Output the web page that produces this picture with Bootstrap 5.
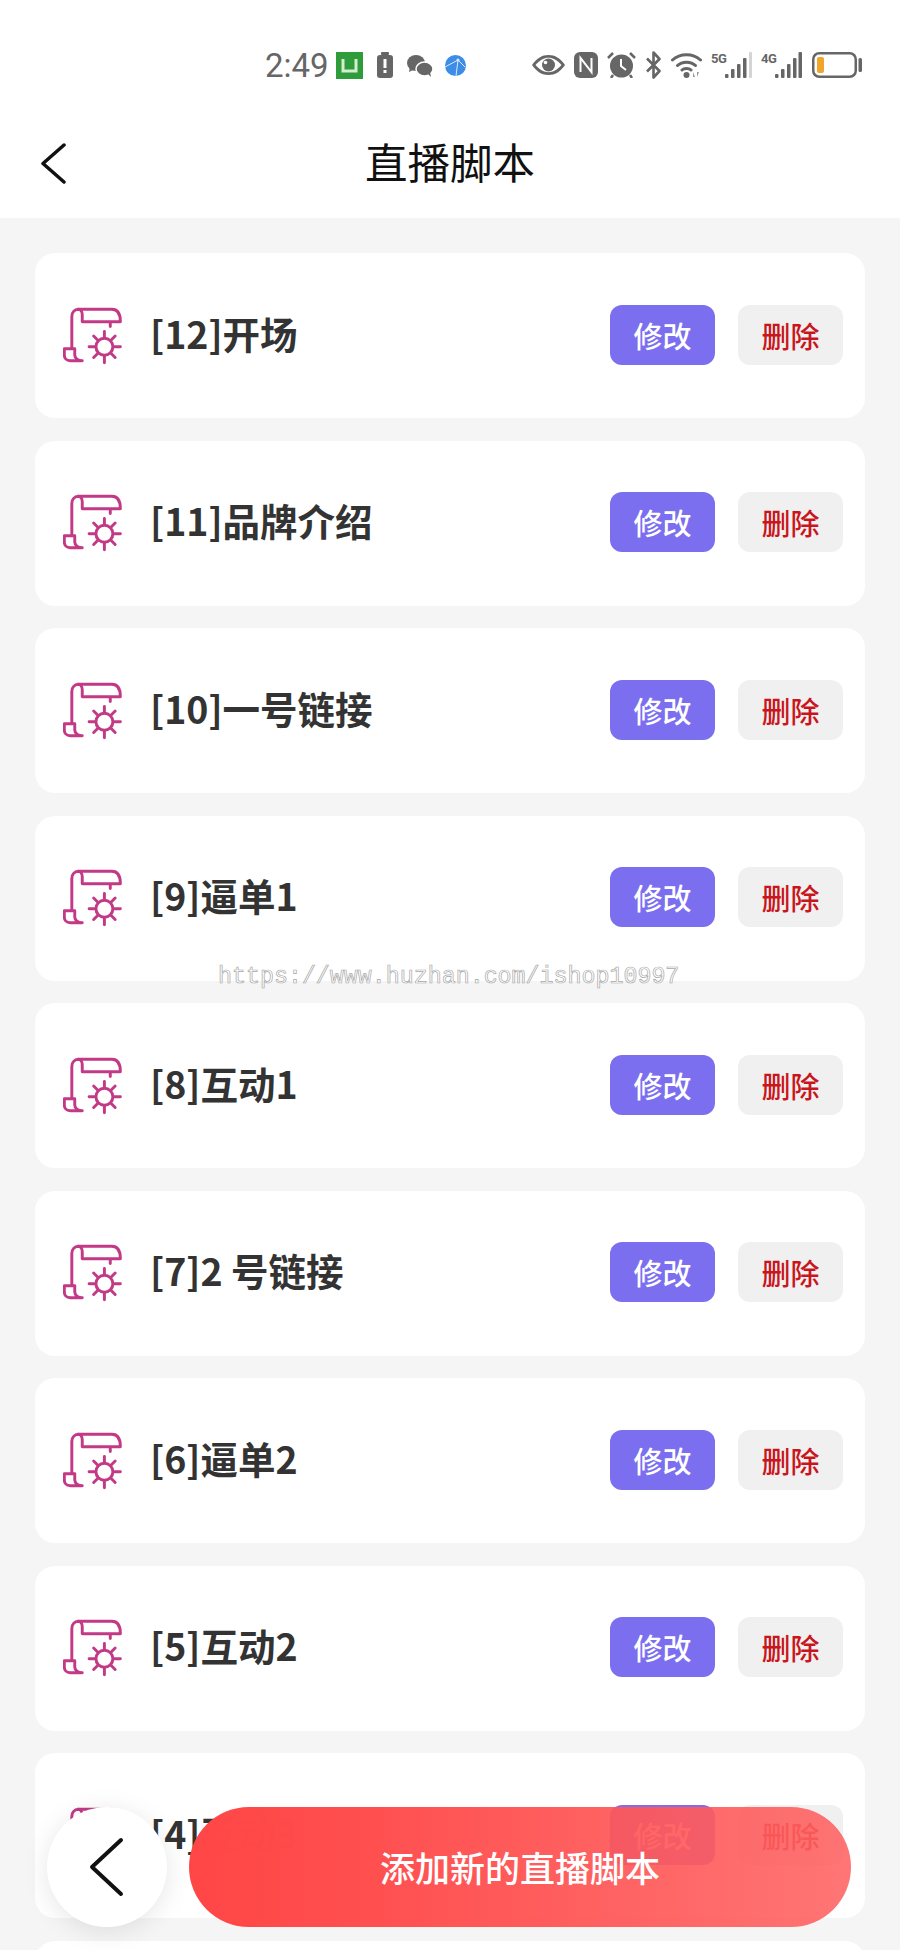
<!DOCTYPE html>
<html lang="zh-CN">
<head>
  <meta charset="UTF-8" />
  <title>直播脚本</title>
  <link href="https://cdn.jsdelivr.net/npm/bootstrap@5.3.3/dist/css/bootstrap.min.css" rel="stylesheet" />
  <style>
    body { background: #f5f5f5; font-family: "Noto Sans CJK SC", "Noto Sans", sans-serif; }
    .screen { width: 900px; height: 1950px; overflow: hidden; }
    .status-row { height: 100px; padding: 52px 38px 0 265px; color: #666; }
    .status-row svg { display: block; fill: #666; }
    .clock { font: 400 33px/27px Roboto, sans-serif; color: #666; width: 62px; }
    .net-tag { font: 700 13px/10px Roboto, sans-serif; color: #666; width: 14px; margin-top: 2px; letter-spacing: -.5px; }
    .ml-9 { margin-left: 9px; }
    .ml-10 { margin-left: 10px; }
    .ml-12 { margin-left: 12px; }
    .ml-14 { margin-left: 14px; }
    .top-nav { height: 118px; }
    .top-nav h1 { font-size: 42.5px; line-height: 1; font-weight: 400; color: #111; margin: 4px 0 0; }
    .nav-back { left: 41px; top: 43px; }
    .script-list { padding: 35px 35px 0; }
    .script-row { height: 165px; margin-bottom: 22.5px; padding: 0 22px 0 28px; border: 0; border-radius: 20px; flex-shrink: 0; }
    .script-name { font-size: 37.5px; font-weight: 700; color: #333; margin: -6px 0 0 27px; line-height: 1; }
    .act-btn { width: 105px; height: 60px; padding: 0; margin-top: -2px; font-size: 29px; font-weight: 500; line-height: 58px; border: 0; border-radius: 12px; }
    .act-edit { background: #7b6ff0; color: #fff; }
    .act-del { background: #f0f0f0; color: #c9161c; margin-left: 23px; }
    .scroll-ico { width: 60px; height: 58px; fill: none; stroke: #c23a86; stroke-width: 9; stroke-linecap: round; stroke-linejoin: round; }
    .mark-text { left: 218px; top: 963px; font: 400 23.3px/28px "Liberation Mono", monospace; color: #fff; -webkit-text-stroke: .7px #a8a8a8; white-space: nowrap; }
    .round-back { left: 47px; top: 1807px; width: 120px; height: 120px; background: #fff; box-shadow: 0 4px 26px rgba(0,0,0,.1); }
    .add-btn { left: 189px; top: 1807px; width: 662px; height: 120px; padding-bottom: 6px; border: 0; color: #fff; font-size: 35px; font-weight: 500; background: linear-gradient(90deg, #ff4646 0%, rgba(255,76,76,.99) 25%, rgba(255,98,98,.88) 100%); }
    .add-btn:hover { color: #fff; background: linear-gradient(90deg, #ff4646 0%, rgba(255,76,76,.99) 25%, rgba(255,98,98,.88) 100%); }
  </style>
</head>
<body>
  <svg width="0" height="0" class="position-absolute">
    <symbol id="scroll" viewBox="186 225 184 178">
      <path d="M245 390H208C197 390 190 382 190 372V353H222V372C222 382 232 390 245 390 M213 353V254C213 241 222 232 235 232H336C352 232 362 243 362 270H245V249C245 240 240 232 232 232 M331 270V285"/>
      <circle cx="313" cy="347" r="26"/>
      <path d="M313 300V319 M313 375V396 M266 347H285 M341 347H362 M280 314L293 327 M333 367L346 380 M280 380L293 367 M333 327L346 314"/>
    </symbol>
  </svg>

  <div class="screen position-relative">
    <div class="bg-white">
      <div class="status-row d-flex justify-content-between">
        <div class="d-flex align-items-start">
          <span class="clock">2:49</span>
          <svg class="ml-9" width="27" height="27" viewBox="0 0 27 27"><rect width="27" height="27" fill="#2f9c3c"/><path d="M7 7V19H20V7" fill="none" stroke="#d5ecd0" stroke-width="3"/></svg>
          <svg class="ml-14" width="16" height="26" viewBox="0 0 16 26"><rect x="4" y="0" width="8" height="3" rx="1"/><rect y="3" width="16" height="23" rx="3"/><rect x="6.500" y="7" width="3" height="9" fill="#fff"/><rect x="6.500" y="18" width="3" height="3" fill="#fff"/></svg>
          <svg class="ml-14" style="margin-top:3px" width="26" height="22" viewBox="0 0 26 22"><ellipse cx="9" cy="8" rx="9" ry="8"/><path d="M3 12L2 17L8 14Z"/><ellipse cx="17.500" cy="14" rx="8.500" ry="7" stroke="#fff" stroke-width="1.500"/><path d="M21 19L24 22L23 17Z"/></svg>
          <svg class="ml-12" style="margin-top:3px" width="21" height="21" viewBox="0 0 21 21"><circle cx="10.500" cy="10.500" r="10.500" fill="#3d8de6"/><path d="M0 12L13 5L20 12 M13 5L11 21" fill="none" stroke="#d8e9fc" stroke-width="1"/><circle cx="13" cy="5" r="1.500" fill="#d8e9fc"/></svg>
        </div>
        <div class="d-flex align-items-start">
          <svg style="margin-top:3px" width="33" height="20" viewBox="0 0 33 20"><path d="M0 10C5 3 10 0 16.500 0S28 3 33 10C28 17 23 20 16.500 20S5 17 0 10Z"/><path d="M3.500 10C8 5 12 2.800 16.500 2.800S25 5 29.500 10C25 15 21 17.200 16.500 17.200S8 15 3.500 10Z" fill="#fff"/><circle cx="16.500" cy="10" r="6.500"/><circle cx="13.500" cy="7.500" r="1.800" fill="#fff"/></svg>
          <svg class="ml-9" width="24" height="26" viewBox="0 0 24 26"><rect width="24" height="26" rx="6"/><path d="M6.500 20V6L17.500 20V6" fill="none" stroke="#fff" stroke-width="2"/></svg>
          <svg class="ml-9" width="29" height="26" viewBox="0 0 29 26"><path d="M1 6L6 1 M28 6L23 1" stroke="#666" stroke-width="2.500" fill="none"/><circle cx="14.500" cy="14" r="11.500"/><path d="M6 23L4 26 M23 23L25 26" stroke="#666" stroke-width="2.500"/><path d="M14 7V14L19 18" fill="none" stroke="#fff" stroke-width="2"/></svg>
          <svg class="ml-9" style="margin-top:-1px" width="17" height="28" viewBox="0 0 17 28"><path d="M2 7.500L14.500 20L8.500 26.500V1.500L14.500 8L2 20.500" fill="none" stroke="#666" stroke-width="2.600" stroke-linejoin="round"/></svg>
          <svg class="ml-9" width="31" height="26" viewBox="0 0 31 26"><path d="M1.500 8C9 1 22 1 29.500 8 M6.500 13.500C11 9 20 9 24.500 13.500 M11 18C13 16 18 16 20 18" fill="none" stroke="#666" stroke-width="3" stroke-linecap="round"/><circle cx="15.500" cy="23" r="3"/><path d="M22 25V20L24 25Z M26 20V25L28 20Z" fill="#999"/></svg>
          <span class="net-tag ml-9">5G</span>
          <svg width="27" height="26" viewBox="0 0 27 26"><rect x="0" y="22" width="3.500" height="4" rx="1"/><rect x="6" y="17" width="3.500" height="9" rx="1"/><rect x="12" y="12" width="3.500" height="14" rx="1"/><rect x="18" y="6" width="3.500" height="20" rx="1"/><rect x="24" y="0" width="3" height="26" rx="1" fill="#d4d4d4"/></svg>
          <span class="net-tag ml-9">4G</span>
          <svg width="27" height="26" viewBox="0 0 27 26"><rect x="0" y="22" width="3.500" height="4" rx="1"/><rect x="6" y="17" width="3.500" height="9" rx="1"/><rect x="12" y="12" width="3.500" height="14" rx="1"/><rect x="18" y="6" width="3.500" height="20" rx="1"/><rect x="23.500" y="0" width="3.500" height="26" rx="1"/></svg>
          <svg class="ml-10" width="50" height="26" viewBox="0 0 50 26"><rect x="1.250" y="1.250" width="42.500" height="23.500" rx="6" fill="none" stroke="#666" stroke-width="2.500"/><rect x="5" y="5" width="7" height="16" rx="2" fill="#f0a52b"/><rect x="46.500" y="6" width="3.500" height="14" rx="1.500"/></svg>
        </div>
      </div>
      <div class="top-nav position-relative d-flex align-items-center justify-content-center">
        <svg class="nav-back position-absolute" width="25" height="41" viewBox="0 0 25 41"><path d="M23 2L2 20.500L23 39" fill="none" stroke="#111" stroke-width="3.500" stroke-linecap="round" stroke-linejoin="round"/></svg>
        <h1>直播脚本</h1>
      </div>
    </div>

    <div class="script-list">
      <div class="card script-row flex-row align-items-center"><svg class="scroll-ico"><use href="#scroll"/></svg><span class="script-name flex-grow-1">[12]开场</span><button class="btn act-btn act-edit">修改</button><button class="btn act-btn act-del">删除</button></div>
      <div class="card script-row flex-row align-items-center"><svg class="scroll-ico"><use href="#scroll"/></svg><span class="script-name flex-grow-1">[11]品牌介绍</span><button class="btn act-btn act-edit">修改</button><button class="btn act-btn act-del">删除</button></div>
      <div class="card script-row flex-row align-items-center"><svg class="scroll-ico"><use href="#scroll"/></svg><span class="script-name flex-grow-1">[10]一号链接</span><button class="btn act-btn act-edit">修改</button><button class="btn act-btn act-del">删除</button></div>
      <div class="card script-row flex-row align-items-center"><svg class="scroll-ico"><use href="#scroll"/></svg><span class="script-name flex-grow-1">[9]逼单1</span><button class="btn act-btn act-edit">修改</button><button class="btn act-btn act-del">删除</button></div>
      <div class="card script-row flex-row align-items-center"><svg class="scroll-ico"><use href="#scroll"/></svg><span class="script-name flex-grow-1">[8]互动1</span><button class="btn act-btn act-edit">修改</button><button class="btn act-btn act-del">删除</button></div>
      <div class="card script-row flex-row align-items-center"><svg class="scroll-ico"><use href="#scroll"/></svg><span class="script-name flex-grow-1">[7]2 号链接</span><button class="btn act-btn act-edit">修改</button><button class="btn act-btn act-del">删除</button></div>
      <div class="card script-row flex-row align-items-center"><svg class="scroll-ico"><use href="#scroll"/></svg><span class="script-name flex-grow-1">[6]逼单2</span><button class="btn act-btn act-edit">修改</button><button class="btn act-btn act-del">删除</button></div>
      <div class="card script-row flex-row align-items-center"><svg class="scroll-ico"><use href="#scroll"/></svg><span class="script-name flex-grow-1">[5]互动2</span><button class="btn act-btn act-edit">修改</button><button class="btn act-btn act-del">删除</button></div>
      <div class="card script-row flex-row align-items-center"><svg class="scroll-ico"><use href="#scroll"/></svg><span class="script-name flex-grow-1">[4]互动3</span><button class="btn act-btn act-edit">修改</button><button class="btn act-btn act-del">删除</button></div>
      <div class="card script-row flex-row align-items-center"></div>
    </div>

    <div class="mark-text position-absolute">https://www.huzhan.com/ishop10997</div>
    <div class="round-back position-absolute rounded-circle d-flex align-items-center justify-content-center">
      <svg width="36" height="60" viewBox="0 0 36 60"><path d="M32 3L3 30L32 57" fill="none" stroke="#111" stroke-width="4" stroke-linecap="round" stroke-linejoin="round"/></svg>
    </div>
    <button class="btn add-btn position-absolute rounded-pill">添加新的直播脚本</button>
  </div>
  <script src="https://cdn.jsdelivr.net/npm/bootstrap@5.3.3/dist/js/bootstrap.bundle.min.js"></script>
</body>
</html>
